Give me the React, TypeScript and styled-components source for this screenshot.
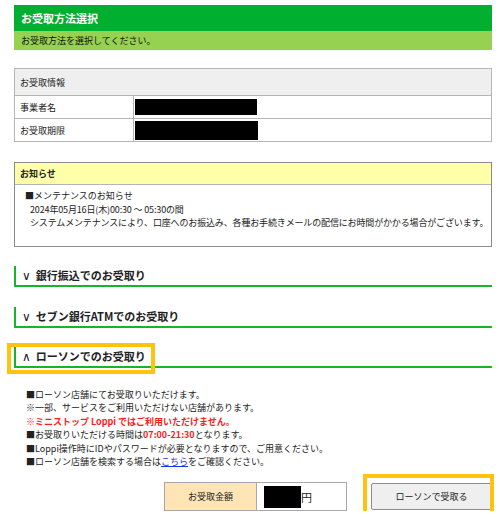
import React from "react";
import styled, { createGlobalStyle } from "styled-components";

const GlobalStyle = createGlobalStyle`
  body {
    margin: 0;
    background: #fff;
    font-family: "Noto Sans CJK JP", "Noto Sans", sans-serif;
    color: #222;
  }
`;

const Page = styled.div`
  width: 478px;
  padding: 5px 8px 0 14px;
  font-size: 9px;
`;

const TitleBar = styled.div`
  background: #00af2f;
  color: #fff;
  font-size: 11px;
  font-weight: bold;
  height: 26px;
  line-height: 26px;
  padding-left: 7px;
`;

const SubBar = styled.div`
  background: #96d152;
  color: #111;
  height: 19px;
  line-height: 19px;
  padding-left: 7px;
`;

const InfoTable = styled.table`
  width: 100%;
  margin-top: 18px;
  border-collapse: collapse;
  border: 1px solid #8a8a8a;
  td,
  th {
    border: 1px solid #b5b5b5;
    padding: 0 5px;
    text-align: left;
    font-weight: normal;
  }
`;

const HeadCell = styled.th`
  background: #efefef;
  height: 26px;
`;

const LabelCell = styled.td`
  width: 108px;
  height: 22px;
`;

const Redacted = styled.span<{ $w: number; $h: number }>`
  display: block;
  width: ${(p) => p.$w}px;
  height: ${(p) => p.$h}px;
  background: #000;
  margin-left: -4px;
`;

const Notice = styled.div`
  margin-top: 20px;
  border: 1px solid #8a8a8a;
`;

const NoticeHead = styled.div`
  background: #ffffaa;
  border-bottom: 1px solid #b5b5b5;
  height: 21px;
  line-height: 21px;
  padding-left: 5px;
  font-weight: bold;
`;

const NoticeBody = styled.div`
  padding: 4px 0 16px 10px;
  line-height: 13.5px;
  white-space: nowrap;
`;

const Indent = styled.div`
  padding-left: 5px;
  letter-spacing: -0.15px;
`;

const Section = styled.div<{ $gap: number }>`
  position: relative;
  margin-top: ${(p) => p.$gap}px;
  border-left: 2px solid #16b52c;
  border-bottom: 2px solid #16b52c;
  height: 19px;
  line-height: 19px;
  padding-left: 6px;
  font-size: 11px;
  font-weight: bold;
  color: #222;
`;

const Chevron = styled.span`
  font-family: "DejaVu Sans", sans-serif;
  font-weight: normal;
  font-size: 12px;
  margin-right: 5px;
`;

const Highlight = styled.span<{ $top: number; $left: number; $w: number; $h: number }>`
  position: absolute;
  top: ${(p) => p.$top}px;
  left: ${(p) => p.$left}px;
  width: ${(p) => p.$w}px;
  height: ${(p) => p.$h}px;
  border: 4px solid #ffc20e;
  box-sizing: border-box;
  pointer-events: none;
`;

const Guide = styled.ul`
  list-style: none;
  margin: 20px 0 0 0;
  padding: 0 0 0 12px;
  line-height: 13.6px;
`;

const Item = styled.li<{ $alert?: boolean }>`
  color: ${(p) => (p.$alert ? "#ff1a1a" : "#222")};
  font-weight: ${(p) => (p.$alert ? "bold" : "normal")};
`;

const Em = styled.span`
  color: #ff1a1a;
  font-weight: bold;
`;

const Link = styled.a`
  color: #1a35e8;
  text-decoration: underline;
`;

const Footer = styled.div`
  display: flex;
  justify-content: flex-end;
  align-items: center;
  gap: 24px;
  margin-top: 13px;
`;

const Amount = styled.div`
  display: grid;
  grid-template-columns: 92px 89px;
  height: 29px;
  border: 1px solid #a8a8a8;
  box-sizing: border-box;
`;

const AmountLabel = styled.div`
  background: #ffe5b6;
  border-right: 1px solid #a8a8a8;
  display: flex;
  align-items: center;
  justify-content: center;
`;

const AmountValue = styled.div`
  display: flex;
  align-items: center;
  padding-left: 11px;
  font-size: 11px;
`;

const ButtonWrap = styled.div`
  position: relative;
`;

const Submit = styled.button`
  width: 121px;
  height: 27px;
  background: #efefef;
  border: 1px solid #8d8d8d;
  border-radius: 2px;
  font-family: "Noto Sans CJK JP", sans-serif;
  font-size: 9px;
  color: #222;
  padding: 0;
`;

export default function App() {
  return (
    <Page>
      <GlobalStyle />
      <TitleBar>お受取方法選択</TitleBar>
      <SubBar>お受取方法を選択してください。</SubBar>

      <InfoTable>
        <tbody>
          <tr>
            <HeadCell colSpan={2}>お受取情報</HeadCell>
          </tr>
          <tr>
            <LabelCell>事業者名</LabelCell>
            <td>
              <Redacted $w={122} $h={16} />
            </td>
          </tr>
          <tr>
            <LabelCell>お受取期限</LabelCell>
            <td>
              <Redacted $w={123} $h={19} />
            </td>
          </tr>
        </tbody>
      </InfoTable>

      <Notice>
        <NoticeHead>お知らせ</NoticeHead>
        <NoticeBody>
          <div>■メンテナンスのお知らせ</div>
          <Indent>2024年05月16日(木)00:30 ～ 05:30の間</Indent>
          <Indent>
            システムメンテナンスにより、口座へのお振込み、各種お手続きメールの配信にお時間がかかる場合がございます。
          </Indent>
        </NoticeBody>
      </Notice>

      <Section $gap={19}>
        <Chevron>∨</Chevron>銀行振込でのお受取り
      </Section>
      <Section $gap={20}>
        <Chevron>∨</Chevron>セブン銀行ATMでのお受取り
      </Section>
      <Section $gap={19}>
        <Chevron>∧</Chevron>ローソンでのお受取り
        <Highlight $top={-4} $left={-9} $w={148} $h={31} />
      </Section>

      <Guide>
        <Item>■ローソン店舗にてお受取りいただけます。</Item>
        <Item>※一部、サービスをご利用いただけない店舗があります。</Item>
        <Item $alert>※ミニストップ Loppi ではご利用いただけません。</Item>
        <Item>
          ■お受取りいただける時間は<Em>07:00-21:30</Em>となります。
        </Item>
        <Item>■Loppi操作時にIDやパスワードが必要となりますので、ご用意ください。</Item>
        <Item>
          ■ローソン店舗を検索する場合は<Link href="#">こちら</Link>をご確認ください。
        </Item>
      </Guide>

      <Footer>
        <Amount>
          <AmountLabel>お受取金額</AmountLabel>
          <AmountValue>
            <Redacted $w={37} $h={22} />
            円
          </AmountValue>
        </Amount>
        <ButtonWrap>
          <Submit>ローソンで受取る</Submit>
          <Highlight $top={-9} $left={-8} $w={131} $h={52} />
        </ButtonWrap>
      </Footer>
    </Page>
  );
}
